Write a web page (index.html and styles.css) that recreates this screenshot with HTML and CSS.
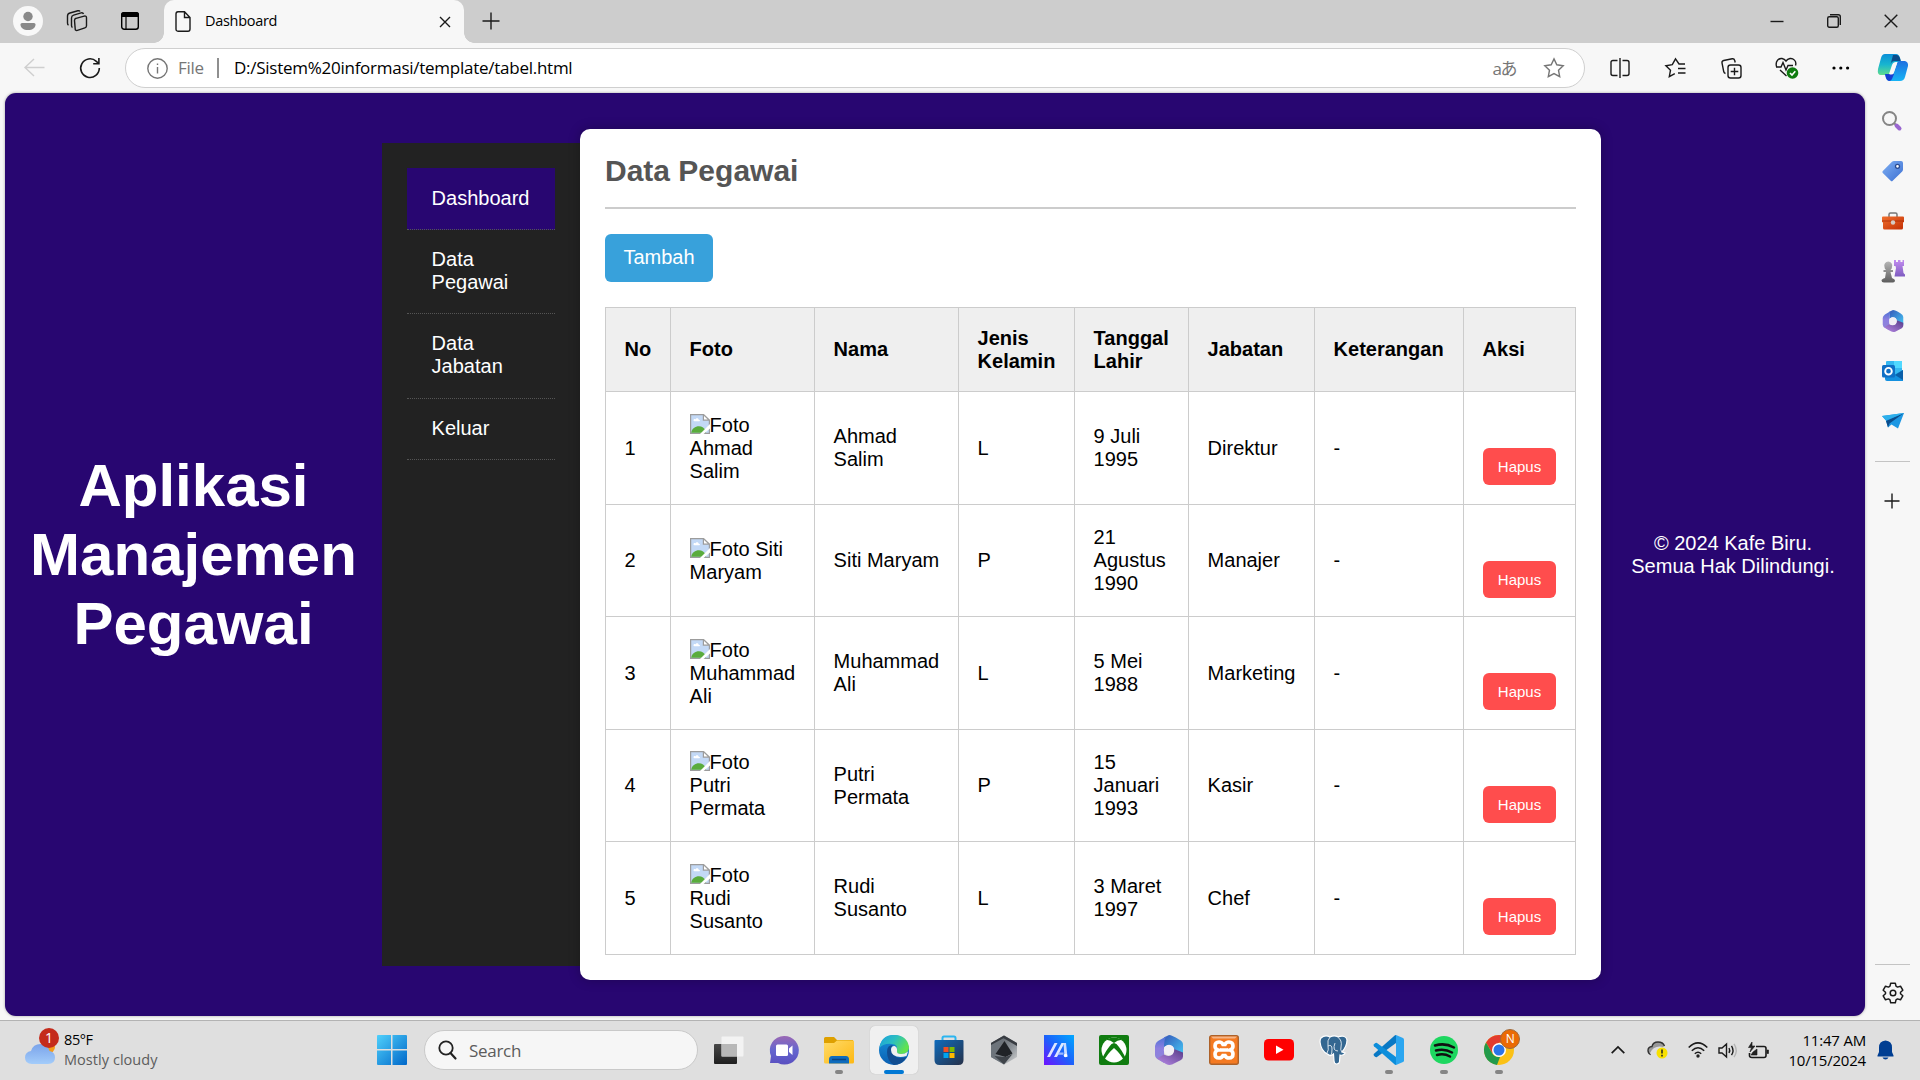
FILE: index.html
```html
<!DOCTYPE html>
<html lang="id">
<head>
<meta charset="utf-8">
<title>Dashboard</title>
<link rel="stylesheet" href="styles.css">
</head>
<body>
<svg class="defs" width="0" height="0">
  <defs>
    <linearGradient id="gWin" x1="0" y1="0" x2="1" y2="1"><stop offset="0" stop-color="#4fd0fb"/><stop offset="1" stop-color="#0067c9"/></linearGradient>
    <linearGradient id="gCloud" x1="0" y1="0" x2="0" y2="1"><stop offset="0" stop-color="#7aa3ea"/><stop offset="1" stop-color="#a3ccfa"/></linearGradient>
    <linearGradient id="gA" x1="0" y1="0" x2="0" y2="1"><stop offset="0" stop-color="#4a72d6"/><stop offset=".45" stop-color="#8d7fe0"/><stop offset="1" stop-color="#8f86d8"/></linearGradient>
    <linearGradient id="gB" x1="0" y1="0" x2="1" y2="1"><stop offset="0" stop-color="#3557b8"/><stop offset="1" stop-color="#45c8f6"/></linearGradient>
    <linearGradient id="gC" x1="0" y1="1" x2="1" y2="0"><stop offset="0" stop-color="#b98ae8"/><stop offset="1" stop-color="#563a86"/></linearGradient>
    <linearGradient id="gCop" x1="0" y1="0" x2="0" y2="1"><stop offset="0" stop-color="#0a8fd8"/><stop offset=".5" stop-color="#18b5cf"/><stop offset="1" stop-color="#5fdc8e"/></linearGradient>
    <linearGradient id="gCop2" x1="0" y1="0" x2="0" y2="1"><stop offset="0" stop-color="#1f6fe0"/><stop offset="1" stop-color="#16b4f5"/></linearGradient>
    <linearGradient id="gTag" x1="0" y1="0" x2="1" y2="1"><stop offset="0" stop-color="#7fb0f3"/><stop offset="1" stop-color="#3c6fd2"/></linearGradient>
    <linearGradient id="gBox" x1="0" y1="0" x2="1" y2="1"><stop offset="0" stop-color="#f0702e"/><stop offset="1" stop-color="#c22e05"/></linearGradient>
    <linearGradient id="gPawn" x1="0" y1="0" x2="0" y2="1"><stop offset="0" stop-color="#b5b5b5"/><stop offset="1" stop-color="#5d5d5d"/></linearGradient>
    <linearGradient id="gRook" x1="0" y1="0" x2="0" y2="1"><stop offset="0" stop-color="#c38df0"/><stop offset="1" stop-color="#7e5cc0"/></linearGradient>
    <linearGradient id="gChat" x1="0" y1="0" x2="0" y2="1"><stop offset="0" stop-color="#9a68b4"/><stop offset=".5" stop-color="#6466cf"/><stop offset="1" stop-color="#5a4fc0"/></linearGradient>
    <linearGradient id="gFold" x1="0" y1="0" x2="1" y2="1"><stop offset="0" stop-color="#ffdb69"/><stop offset="1" stop-color="#fdb813"/></linearGradient>
    <linearGradient id="gEdgeT" x1="0" y1="0" x2="1" y2=".5"><stop offset="0" stop-color="#1b9de0"/><stop offset=".5" stop-color="#2bbfc0"/><stop offset="1" stop-color="#62e34d"/></linearGradient>
    <linearGradient id="gEdgeL" x1="0" y1="0" x2="0" y2="1"><stop offset="0" stop-color="#1792dc"/><stop offset="1" stop-color="#0a5fb2"/></linearGradient>
    <linearGradient id="gStore" x1="0" y1="0" x2="1" y2="1"><stop offset="0" stop-color="#0f6cbd"/><stop offset="1" stop-color="#263048"/></linearGradient>
    <linearGradient id="gHex" x1="0" y1="0" x2="1" y2="1"><stop offset="0" stop-color="#4a4f55"/><stop offset=".6" stop-color="#8b9197"/><stop offset="1" stop-color="#d5d5d5"/></linearGradient>
    <linearGradient id="gM" x1="0" y1="1" x2="1" y2="0"><stop offset="0" stop-color="#7010ff"/><stop offset=".5" stop-color="#1c62fb"/><stop offset="1" stop-color="#00a8ff"/></linearGradient>
    <linearGradient id="gTask" x1="0" y1="0" x2="0" y2="1"><stop offset="0" stop-color="#484848"/><stop offset="1" stop-color="#1f1f1f"/></linearGradient>
    <symbol id="broken" viewBox="0 0 20 20">
      <path d="M.6.6h12.800l6 5.600V19.400H.6z" fill="#c3d9f6" stroke="#9c9c9c" stroke-width="1.200"/>
      <path d="M13.400.6v5.600h6z" fill="#fff" stroke="#9c9c9c" stroke-width="1.200"/>
      <path d="M3.500 6.500c0-1.400 1.500-1.800 2-1 .5-2 3.300-1.600 3.200.2 1.500-.2 1.600 1.500.6 1.500H4.500c-.6 0-1-.3-1-.7z" fill="#fff"/>
      <path d="M1.200 18.800c1-8 12.500-9 14.500-1.500v1.500z" fill="#5aac3d"/>
      <path d="M20.500 9.500V14l-7.500 6.500H9.500z" fill="#fff"/>
    </symbol>
    <symbol id="m365" viewBox="0 0 30 30">
      <path d="M10 2.500L15 0q3 0 10 4.500 4 2 4 5v11L20 14q-1-4-6-4l-4 2z" fill="url(#gB)"/>
      <path d="M12 1.500L4 6Q1 8 1 11v9q0 3 4 5l5 3v-9l0-9q0-5 2-8.500z" fill="url(#gA)"/>
      <path d="M29 17.500v4q0 2-2 3.500l-9 4.500q-3 1-6-.5L3 23.500l7-4q5 3 9-.5l1-5z" fill="url(#gC)"/>
      <circle cx="15" cy="15" r="5.200" fill="#f1eff5"/>
    </symbol>
  </defs>
</svg>

<div class="tabbar">
  <span class="slot w56"><svg width="30" height="30" viewBox="0 0 30 30"><circle cx="15" cy="15" r="15" fill="#f8f8f8"/><circle cx="15" cy="10.500" r="4.700" fill="#8a8a8a"/><path d="M7.500 18.500q0-1.500 1.500-1.500h12q1.500 0 1.500 1.500c0 3.500-3 5.500-7.500 5.500s-7.500-2-7.500-5.500z" fill="#8a8a8a"/></svg></span>
  <span class="slot w43"><svg class="line" width="22" height="22" viewBox="0 0 22 22"><path d="M8.500 10.500q0-1.800 1.600-2.200l8-2.200q2.400-.5 2.400 1.600v8q0 1.700-1.600 2.200l-7.500 2.500q-2.200.5-2.200-1.500z"/><path d="M17.500 4q-.5-1.500-2.400-1.100l-7.500 2.200Q5.500 5.700 5.500 8v7.500q0 1.500 1 2"/><path d="M14 1.600Q13.500.4 11.800.8L4 3Q1.500 3.700 1.500 6v7q0 1.500 1 2.200"/></svg></span>
  <span class="slot w62"><svg width="20" height="20" viewBox="0 0 20 20"><rect x="1.700" y="1.700" width="16.600" height="16.600" rx="2.500" fill="none" stroke="#000" stroke-width="1.400"/><path d="M1 6V3.500Q1 1 3.500 1h13Q19 1 19 3.500V6z"/><path d="M6 6v12" stroke="#000" stroke-width="1.200"/></svg></span>
  <div class="tab">
    <svg class="line" width="16" height="21" viewBox="0 0 16 21"><path d="M1 3q0-2.200 2-2.200h6.500L15 6.500v11.500q0 2.200-2 2.200H3q-2 0-2-2.200zM9.500 1v5.500H15"/></svg>
    <span class="tab-title">Dashboard</span>
    <svg class="line" width="12" height="12" viewBox="0 0 12 12"><path d="M1 1l10 10M11 1L1 11"/></svg>
  </div>
  <span class="slot w55"><svg class="line" width="18" height="18" viewBox="0 0 18 18"><path d="M9 .5v17M.5 9h17"/></svg></span>
  <div class="window-buttons">
    <span class="slot w57"><svg class="line" width="14" height="14" viewBox="0 0 14 14"><path d="M.5 7.500h13"/></svg></span>
    <span class="slot w57"><svg class="line" width="14" height="14" viewBox="0 0 14 14"><rect x=".7" y="2.700" width="10.600" height="10.600" rx="1.500"/><path d="M3 .7h8.300q2 0 2 2V11"/></svg></span>
    <span class="slot w58"><svg class="line" width="14" height="14" viewBox="0 0 14 14"><path d="M.7.7l12.600 12.600M13.300.7L.7 13.300"/></svg></span>
  </div>
</div>

<div class="toolbar">
  <span class="slot w69"><svg class="line faint" width="21" height="19" viewBox="0 0 21 19"><path d="M10 1L1 9.500 10 18M1 9.500h19.500"/></svg></span>
  <span class="slot w42"><svg class="line" width="22" height="22" viewBox="0 0 22 22"><path d="M20.300 11a9.300 9.300 0 1 1-3-6.700L19.700 6.500M19.900 1v5.700h-5.700" stroke-width="1.600"/></svg></span>
  <div class="address">
    <svg class="line grey" width="21" height="21" viewBox="0 0 21 21"><circle cx="10.500" cy="10.500" r="9.700"/><path d="M10.500 9v6.500M10.500 5.500v1.600"/></svg>
    <span class="scheme">File</span>
    <span class="divider"></span>
    <span class="url">D:/Sistem%20informasi/template/tabel.html</span>
    <span class="translate">aあ</span>
    <svg class="line grey" width="20" height="20" viewBox="0 0 20 20"><path d="M10 .9l2.800 5.900 6.400.9-4.700 4.500 1.200 6.500L10 15.600l-5.700 3.100 1.200-6.500L.8 7.700l6.400-.9z"/></svg>
  </div>
  <div class="tools">
    <span class="slot w56"><svg class="line" width="20" height="20" viewBox="0 0 20 20"><path d="M7.500 2.500H3Q1 2.500 1 4.500v11q0 2 2 2h4.500M12.500 2.500H17q2 0 2 2v11q0 2-2 2h-4.500M10 0v20"/></svg></span>
    <span class="slot w55"><svg class="line" width="21" height="20" viewBox="0 0 21 20"><path d="M20 6h-6L10.500.9 7.300 6.700.9 7.700l4.600 4.500-1.200 6.500 5.500-3M13 10.500h7.500M13 15h7.500"/></svg></span>
    <span class="slot w56"><svg class="line" width="21" height="21" viewBox="0 0 21 21"><rect x="7" y="7" width="13" height="13" rx="2.500"/><path d="M13.500 9.700v7.600M9.700 13.500h7.600M4.500 15.500Q3 15 2.700 13.500L1 5Q.7 3 2.700 2.500l8.500-1.700q2-.3 2.500 1.700l.5 2"/></svg></span>
    <span class="slot w55"><svg class="line" width="24" height="22" viewBox="0 0 24 22"><path d="M1.500 9.500C0 4 4 1 7 1.500q2.500.5 4 2.500 1.500-2 4-2.500c3-.5 7 2.500 5.500 7M1 10h5l2-4.500 3 7.500 2-4.500h5M5 13l6.500 6"/><circle cx="17.500" cy="16" r="5.800" fill="#107c10" stroke="none"/><path d="M15 16l2 2 3.300-3.700" stroke="#fff" stroke-width="1.600"/></svg></span>
    <span class="slot w54"><svg width="18" height="4" viewBox="0 0 18 4"><circle cx="2" cy="2" r="1.600"/><circle cx="8.800" cy="2" r="1.600"/><circle cx="15.600" cy="2" r="1.600"/></svg></span>
    <span class="slot w50"><svg width="30" height="28" viewBox="0 0 30 28"><path d="M7 0h11q3 0 4 4l1 4h-5q-3 0-4 3l-3 9q-1 1-3 1H3q-4 0-3-6L3 4q1-4 4-4z" fill="url(#gCop)"/><path d="M15 1h4q3 1 3.700 6h-6q-3 0-4 3z" fill="#0b4c8a"/><path d="M22 7h5q3.500 1 3 5l-3 11q-1 4-5 4H12q-3 0-4-3l-1-4h6q2 0 3-2l3-9q1-2 3-2z" fill="url(#gCop2)"/><path d="M7 20h9l-2 5q-1 2-3 2Q9 27 8 24z" fill="#173fd2"/><path d="M17.500 9h1.700l-3.700 10.500q-.5 1-2 1h-2z" fill="#f7f7f7"/></svg></span>
  </div>
</div>

<div class="body">
  <div class="page">
    <header class="brand"><h1>Aplikasi Manajemen Pegawai</h1></header>
    <nav class="menu">
      <a class="active">Dashboard</a>
      <a>Data Pegawai</a>
      <a>Data Jabatan</a>
      <a>Keluar</a>
    </nav>
    <main class="card">
      <h2>Data Pegawai</h2>
      <a class="add">Tambah</a>
      <table>
        <colgroup><col class="c-no"><col class="c-foto"><col class="c-nama"><col class="c-jk"><col class="c-tgl"><col class="c-jab"><col class="c-ket"><col class="c-aksi"></colgroup>
        <thead><tr><th>No</th><th>Foto</th><th>Nama</th><th>Jenis Kelamin</th><th>Tanggal Lahir</th><th>Jabatan</th><th>Keterangan</th><th>Aksi</th></tr></thead>
        <tbody>
          <tr><td>1</td><td><svg class="broken"><use href="#broken"/></svg>Foto Ahmad Salim</td><td>Ahmad Salim</td><td>L</td><td>9 Juli 1995</td><td>Direktur</td><td>-</td><td class="action"><button>Hapus</button></td></tr>
          <tr class="short"><td>2</td><td><svg class="broken"><use href="#broken"/></svg>Foto Siti Maryam</td><td>Siti Maryam</td><td>P</td><td>21 Agustus 1990</td><td>Manajer</td><td>-</td><td class="action"><button>Hapus</button></td></tr>
          <tr><td>3</td><td><svg class="broken"><use href="#broken"/></svg>Foto Muhammad Ali</td><td>Muhammad Ali</td><td>L</td><td>5 Mei 1988</td><td>Marketing</td><td>-</td><td class="action"><button>Hapus</button></td></tr>
          <tr class="short"><td>4</td><td><svg class="broken"><use href="#broken"/></svg>Foto<br>Putri Permata</td><td>Putri Permata</td><td>P</td><td>15 Januari 1993</td><td>Kasir</td><td>-</td><td class="action"><button>Hapus</button></td></tr>
          <tr><td>5</td><td><svg class="broken"><use href="#broken"/></svg>Foto<br>Rudi Susanto</td><td>Rudi Susanto</td><td>L</td><td>3 Maret 1997</td><td>Chef</td><td>-</td><td class="action"><button>Hapus</button></td></tr>
        </tbody>
      </table>
    </main>
    <footer class="copyright">© 2024 Kafe Biru.<br>Semua Hak Dilindungi.</footer>
  </div>

  <aside class="sidebar">
    <span class="app"><svg width="20" height="20" viewBox="0 0 20 20"><circle cx="7.500" cy="7.500" r="6.500" fill="none" stroke="#858585" stroke-width="2"/><path d="M12 12l2 2" stroke="#858585" stroke-width="2"/><path d="M14.500 14.500l3 3" stroke="#9a66d0" stroke-width="4" stroke-linecap="round"/></svg></span>
    <span class="app"><svg width="21" height="21" viewBox="0 0 21 21"><path d="M10 .8q.8-.8 2-.8h7q2 0 2 2v6.500q0 1.200-.8 2l-9.500 9.300q-1 1-2 0L.8 12q-1-1 0-2z" fill="url(#gTag)"/><circle cx="15.500" cy="5.300" r="2" fill="#fff" stroke="#2c4d92" stroke-width="1.300"/></svg></span>
    <span class="app"><svg width="22" height="18" viewBox="0 0 22 18"><path d="M7 5V2.500Q7 1 8.500 1h5Q15 1 15 2.500V5" fill="none" stroke="#777" stroke-width="1.500"/><path d="M0 5.500Q0 4.500 1 4.500h20q1 0 1 1V10l-1 .5V16q0 1.500-1.500 1.500h-17Q1 17.500 1 16v-5.500L0 10z" fill="url(#gBox)"/><path d="M0 9h22" stroke="#a92b08" stroke-width=".8"/><circle cx="11" cy="10.500" r="2.200" fill="#d5cbc6"/></svg></span>
    <span class="app"><svg width="24" height="23" viewBox="0 0 24 23"><path d="M13 0h2v2h2V0h2.500v2h2V0H23v6h-1.500l1 7 1.500 1.500v2H13.500L15 8 14.500 6H13z" fill="url(#gRook)"/><path d="M3.500 7a4 4 0 1 1 7.500 0q0 2-1.500 3H12v2H9.500l1.500 6q3 1 3 2.500 0 2-2 2H3q-2.500 0-2.500-2Q.5 19 4 18l1-6H2.500v-2H5q-1.500-1-1.500-3z" fill="url(#gPawn)"/></svg></span>
    <span class="app"><svg width="22" height="22"><use href="#m365"/></svg></span>
    <span class="app"><svg width="21" height="20" viewBox="0 0 21 20"><rect x="4" width="16" height="18" rx="1" fill="#35b8f1"/><path d="M12 0h7q1 0 1 1v6h-8z" fill="#50d9ff"/><path d="M3 10l9 4 9-5v11H5q-2 0-2-2z" fill="#1490df"/><path d="M13 14l8-5v10z" fill="#0a5fa8"/><rect y="4" width="13" height="12.500" rx="1.500" fill="#0f6fc5"/><circle cx="6.500" cy="10.200" r="3.300" fill="none" stroke="#fff" stroke-width="1.900"/></svg></span>
    <span class="app"><svg width="22" height="16" viewBox="0 0 22 16"><path d="M0 3l22-3-6 15.500-6.500-4-3.500 3-2-7z" fill="#1c97e3"/><path d="M22 0L4 8l2 6.500 1.500-4z" fill="#0a4d8c"/><path d="M0 3l22-3L4 7.500z" fill="#2db0ec"/></svg></span>
    <span class="rule"></span>
    <span class="app add-app"><svg class="line" width="16" height="16" viewBox="0 0 16 16"><path d="M8 .5v15M.5 8h15"/></svg></span>
    <span class="rule low"></span>
    <span class="app"><svg class="line" width="22" height="22" viewBox="0 0 22 22"><path d="M8.700 1.200h4.600l.7 3 1.500.9 3-.9 2.300 4-2.300 2v1.600l2.300 2-2.300 4-3-.9-1.500.9-.7 3H8.700l-.7-3-1.500-.9-3 .9-2.300-4 2.300-2v-1.600l-2.300-2 2.300-4 3 .9L8 4.200z" stroke-linejoin="round" stroke-width="1.500"/><circle cx="11" cy="11" r="2.800" stroke-width="1.500"/></svg></span>
  </aside>
</div>

<div class="taskbar">
  <div class="weather">
    <svg width="36" height="38" viewBox="0 0 36 38"><circle cx="24" cy="19" r="6" fill="#f49b1c"/><path d="M7 36q-7 0-7-6.500Q0 24 6 23q2-7 9.500-7 7 0 9 7 5.500 1 5.500 6.500Q30 36 23 36z" fill="url(#gCloud)"/><circle cx="24" cy="10" r="10" fill="#c42b1c"/><text x="24" y="15" class="badge">1</text></svg>
    <div><div class="temp">85°F</div><div class="sky">Mostly cloudy</div></div>
  </div>
  <svg class="start" width="30" height="30" viewBox="0 0 30 30"><path d="M1 0h13v14H0V1q0-1 1-1zM15.500 0H29q1 0 1 1v13H15.500zM0 15.500h14V30H1q-1 0-1-1zM15.500 15.500H30V29q0 1-1 1H15.500z" fill="url(#gWin)"/></svg>
  <div class="search"><svg width="19" height="20" viewBox="0 0 19 20"><circle cx="8" cy="8" r="6.700" fill="none" stroke="#222" stroke-width="1.800"/><path d="M12.500 13l5 5.500" stroke="#222" stroke-width="2.200" stroke-linecap="round"/></svg><span>Search</span></div>
  <div class="apps">
    <span class="task"><svg width="30" height="30" viewBox="0 0 30 30"><rect y="9" width="23" height="20" rx="1" fill="url(#gTask)"/><rect x="7.500" y="1.500" width="22" height="20" rx="1" fill="#f8f8f8" opacity=".8"/><rect x="7.500" y="9" width="15.500" height="12.500" fill="#b8b8b8"/></svg></span>
    <span class="task"><svg width="30" height="30" viewBox="0 0 30 30"><path d="M15 1a14.300 14.300 0 1 1-6 27H1l1-7A14.300 14.300 0 0 1 15 1z" fill="url(#gChat)"/><rect x="7" y="9.500" width="12" height="11.500" rx="1.500" fill="#fff"/><path d="M20 13.500l3.500-3v9.500L20 17z" fill="#fff"/></svg></span>
    <span class="task running"><svg width="30" height="30" viewBox="0 0 30 30"><path d="M0 3.500Q0 2 1.500 2H10l3 3h16v8H0z" fill="#dea000"/><path d="M0 8h10l3-2.500h16q1 0 1 1V27q0 1.500-1.500 1.500h-27Q0 28.500 0 27z" fill="url(#gFold)"/><path d="M5 28.500v-4q0-3.500 3-3.500h14q3 0 3 3.500v4z" fill="#0f6cbd"/><path d="M8 24.500h14" stroke="#0a4382" stroke-width="1.500"/></svg></span>
    <span class="task running current"><svg width="30" height="30" viewBox="0 0 30 30"><circle cx="15" cy="15" r="15" fill="url(#gEdgeL)"/><path d="M.5 13Q2 0 15 0t15 12q0 7-8 7-5 0-4-3 1-7-5-7Q5 8 .5 13z" fill="url(#gEdgeT)"/><path d="M8 17q0-7 6-7-4 4 0 9 4 6 13.500 3Q23 30 15 30 8 26 8 17z" fill="#114d91"/><path d="M12 15q0-4 3.500-4 3 1 2.500 5-.5 3 4 3 4 0 7-2.500l-1.500 4.500q-8 2.500-13-1-2.500-2-2.500-5z" fill="#f0f0f0"/></svg></span>
    <span class="task"><svg width="30" height="30" viewBox="0 0 30 30"><path d="M8.500 8V3Q8.500 1.500 10 1.500h10Q21.500 1.500 21.500 3v5" fill="none" stroke="#2bb5f0" stroke-width="2"/><path d="M.5 6q0-1 1-1h27q1 0 1 1v19q0 5-5 5h-19q-5 0-5-5z" fill="url(#gStore)"/><path fill="#f25022" d="M9.500 12h5v5h-5z"/><path fill="#7fba00" d="M15.500 12h5v5h-5z"/><path fill="#00a4ef" d="M9.500 18h5v5h-5z"/><path fill="#ffb900" d="M15.500 18h5v5h-5z"/></svg></span>
    <span class="task"><svg width="30" height="30" viewBox="0 0 30 30"><path d="M15 .5L28 8v14l-13 7.500L2 22V8z" fill="url(#gHex)"/><path d="M15 .5L28 8v3L15 3.500 2 11V8z" fill="#383c42"/><path d="M2 10l13-7-9 17 9 9.500L2 22z" fill="#6d747b"/><path d="M15.500 6l8 12.500-7 3.500-10-3z" fill="#202327"/><path d="M5.500 21l11 1 7-3-8.500 10.500z" fill="#3f444a"/></svg></span>
    <span class="task"><svg width="30" height="30" viewBox="0 0 30 30"><path d="M0 0h30v30H0z" fill="url(#gM)"/><path d="M3 22l7.500-14h3L6 22zM10 22l7.500-14h3L13 22z" fill="#fff" opacity=".85"/><path d="M19.500 8h2.500l1.500 14h-3z" fill="#c9dcff"/><path d="M14.500 17.500h5v2.200h-6z" fill="#b9d0ff" opacity=".8"/><circle cx="21.500" cy="20.500" r="1.700" fill="#fff"/></svg></span>
    <span class="task"><svg width="30" height="30" viewBox="0 0 30 30"><rect width="30" height="30" rx="2" fill="#107c10"/><circle cx="15" cy="15" r="12.500" fill="#fff"/><path d="M6 5.500Q10 4 15 8q5-4 9-2.500L22 4Q15 1 8 4zM3 24Q7 15 12.500 9L15 8l2.500 1Q23 15 27 24l-2 2Q22 19 15 13 8 19 5 26z" fill="#107c10"/></svg></span>
    <span class="task"><svg width="30" height="30"><use href="#m365"/></svg></span>
    <span class="task"><svg width="30" height="30" viewBox="0 0 30 30"><rect x=".7" y=".7" width="28.600" height="28.600" rx="2" fill="#f47a22" stroke="#ad6129" stroke-width="1.400"/><path d="M2 1.500h26l-2 2H4z" fill="#f5b588"/><path d="M14 9.500q-1-2.500-4-2.500-4 0-4 4 0 3 3 4-3 1-3 4 0 4 4 4 3 0 4-2.500h2q1 2.500 4 2.500 4 0 4-4 0-3-3-4 3-1 3-4 0-4-4-4-3 0-4 2.500zM11 15h8" fill="none" stroke="#fff" stroke-width="3.600"/></svg></span>
    <span class="task"><svg width="30" height="30" viewBox="0 0 30 30"><rect y="4" width="30" height="21.500" rx="4.500" fill="#f00"/><path d="M12 10.500v8.500l7.500-4.200z" fill="#fff"/></svg></span>
    <span class="task"><svg width="30" height="30" viewBox="0 0 30 30"><path d="M2 3q4-3.500 9-1 4-2 8-.2Q27-.5 28 5q0 6-5 12l3 1q-1 3-5 2l-.5 7q-.5 2-3 2-2 0-2.500-3l-.5-7q-3 3-6 0Q2 16 1 7q0-3 1-4z" fill="#336791" stroke="#fff" stroke-width="1.200"/><path d="M11 2q-3 3-2 9 1 4-1 7M18.500 2q5 3 3.500 10-1 3 1 5M9 11q4-2 4 3t-1 6M16 8q-3 8 3 8" fill="none" stroke="#e8eef4" stroke-width=".9"/></svg></span>
    <span class="task running"><svg width="30" height="30" viewBox="0 0 30 30"><path d="M22 0l7 3q1 .5 1 1.500v21q0 1-1 1.500l-7 3z" fill="#2ba6f0"/><path d="M22 0v8L3 22q-1 .5-2-.3l-1-1q-1-1 0-2L21 .3z" fill="#0878c4"/><path d="M22 30v-8L3 8q-1-.5-2 .3l-1 1q-1 1 0 2L21 29.700z" fill="#0d8edb"/></svg></span>
    <span class="task running"><svg width="30" height="30" viewBox="0 0 30 30"><circle cx="15" cy="15" r="14" fill="#1ed760"/><path d="M6 10.500q10-3 19 2M7 15.500q8.500-2.300 16 2M8 20q7-2 13 1.500" fill="none" stroke="#101010" stroke-width="2.500" stroke-linecap="round"/></svg></span>
    <span class="task running"><svg width="30" height="30" viewBox="0 0 30 30"><circle cx="15" cy="15" r="15" fill="#fbc116"/><path d="M2 7.500A15 15 0 0 1 28 7.500H15l-6.500 11z" fill="#e33b2e"/><path d="M2 7.500l6.500 11.300q2.500 3.500 7.500 3.200l-3 8A15 15 0 0 1 2 7.500z" fill="#229a4b"/><circle cx="15" cy="15" r="7" fill="#fff"/><circle cx="15" cy="15" r="5.500" fill="#2b74e8"/></svg><span class="notice">N</span></span>
  </div>
  <div class="tray">
    <span class="slot w38"><svg class="line" width="14" height="8" viewBox="0 0 14 8"><path d="M.7 7.200L7 1l6.300 6.200" stroke-width="1.700"/></svg></span>
    <span class="slot w40"><svg width="21" height="18" viewBox="0 0 21 18"><path d="M4 13.500q-3-1-3-4Q1 6 5 5.500 6 1 11 1q5 0 6.500 4" fill="#999" stroke="#333" stroke-width="1.400"/><path d="M3 12Q7 4 16 6l-6 8H4z" fill="#dedede"/><circle cx="15" cy="12" r="5.500" fill="#f7e000"/><path d="M15 8.500v4M15 13.700v1.700" stroke="#222" stroke-width="1.500"/></svg></span>
    <span class="slot w41"><svg class="line" width="20" height="16" viewBox="0 0 20 16"><path d="M.7 5.500q9.300-9.300 18.600 0M3.800 8.700q6.200-6 12.400 0M6.800 11.700q3.200-3 6.400 0" stroke-width="1.500"/><circle cx="10" cy="14" r="1.700" fill="#222" stroke="none"/></svg></span>
    <span class="slot w20"><svg class="line" width="20" height="17" viewBox="0 0 20 17"><path d="M1 6h3l4.500-4v13L4 11H1zM11 6q1.500 2.500 0 5M13.500 3.800q3 4.700 0 9.400"/><path d="M16 1.800q4.500 6.700 0 13.400" stroke="#b5b5b5"/></svg></span>
    <span class="slot w41"><svg class="line" width="21" height="17" viewBox="0 0 21 17"><path d="M8 4.500h8q2 0 2 2v7q0 2-2 2H4q-2.500 0-2.500-2V11" stroke-width="1.600"/><path d="M19 8h1.500v3.500H19zM9 7v6H3l2-3zM4 0L.5 5.500h3L2 10l5-6H4z" fill="#222" stroke-width=".6"/></svg></span>
    <div class="clock"><div class="time">11:47 AM</div><div class="date">10/15/2024</div></div>
    <svg class="bell" width="17" height="20" viewBox="0 0 17 20"><path d="M8.500.5Q15 1 15 7.500V12l1.500 3.500v1H.5v-1L2 12V7.500Q2 1 8.500.5zM5.500 17.500h6q-1 2-3 2t-3-2z" fill="#003e92"/></svg>
  </div>
</div>
</body>
</html>
```

FILE: styles.css
```css
* { box-sizing: border-box; }
body {
  margin: 0;
  width: 1920px;
  height: 1080px;
  overflow: hidden;
  display: flex;
  flex-direction: column;
  background: #f7f7f7;
  color: #000;
  font-family: "Open Sans", "Noto Sans", "Noto Sans CJK JP", sans-serif;
}
.defs { position: absolute; }
svg { display: block; flex: none; overflow: visible; }
.line { fill: none; stroke: #1a1a1a; stroke-width: 1.4; }
.line.grey { stroke: #767676; }
.line.faint { stroke: #cfcfcf; }
.slot { display: flex; align-items: center; justify-content: center; flex: none; }
.w20 { width: 20px; } .w38 { width: 38px; } .w40 { width: 40px; } .w41 { width: 41px; }
.w42 { width: 42px; } .w43 { width: 43px; } .w50 { width: 50px; } .w54 { width: 54px; }
.w55 { width: 55px; } .w56 { width: 56px; } .w57 { width: 57px; } .w58 { width: 58px; }
.w62 { width: 62px; } .w69 { width: 69px; }

/* Tab strip */
.tabbar { display: flex; height: 43px; flex: none; background: #cdcdcd; }
.tabbar > .slot, .window-buttons { padding-bottom: 1px; }
.tabbar > .w43 { padding-right: 1px; }
.tabbar > .w55 { padding-right: 2px; }
.tab {
  position: relative;
  display: flex;
  align-items: center;
  width: 300px;
  margin-left: 3px;
  padding: 0 13px 0 11px;
  background: #f7f7f7;
  border-radius: 10px 10px 0 0;
}
.tab::before, .tab::after {
  content: "";
  position: absolute;
  bottom: 0;
  width: 10px;
  height: 10px;
}
.tab::before { left: -10px; background: radial-gradient(circle at 0 0, transparent 9.500px, #f7f7f7 10px); }
.tab::after { right: -10px; background: radial-gradient(circle at 100% 0, transparent 9.500px, #f7f7f7 10px); }
.tab-title { flex: 1; margin-left: 14px; padding-bottom: 2px; font-size: 14.500px; letter-spacing: -.3px; }
.window-buttons { display: flex; margin-left: auto; }

/* Address row */
.toolbar { display: flex; height: 50px; flex: none; }
.toolbar > .slot { padding-bottom: 1px; }
.address {
  display: flex;
  align-items: center;
  width: 1460px;
  height: 40px;
  margin: 5px 0 0 14px;
  padding: 0 20px 0 21px;
  background: #fff;
  border: 1px solid #cfcfcf;
  border-radius: 20px;
  font-size: 17px;
}
.scheme { width: 39px; margin-left: 10px; padding-bottom: 2px; color: #767676; letter-spacing: -.3px; }
.divider { width: 2px; height: 20px; background: #8f8f8f; }
.url { flex: 1; margin-left: 15px; padding-bottom: 2px; letter-spacing: -.26px; white-space: nowrap; }
.translate { margin-right: 28px; padding-bottom: 2px; color: #767676; font-size: 17px; letter-spacing: -1.500px; }
.tools { display: flex; margin-left: 7px; padding-bottom: 0; }

/* Viewport */
.body { display: flex; height: 927px; flex: none; }
.page {
  display: flex;
  align-items: center;
  width: 1860px;
  height: 923px;
  margin-left: 5px;
  background: #280671;
  border-radius: 11px;
  box-shadow: 0 0 3px rgba(0, 0, 0, .35);
  color: #fff;
  font: 20px/23px "Liberation Sans", Arial, sans-serif;
}
.brand { width: 377px; padding: 0 25px; text-align: center; }
.brand h1 { margin: 0; font-size: 60px; line-height: 69px; }
.menu { width: 198px; height: 823px; padding: 25px; background: #222; }
.menu a { display: block; padding: 18px 24px 19px 24.600px; border-bottom: 1px dotted #555; }
.menu .active { padding-top: 19px; background: #280671; }
.menu a:nth-child(3) { padding-bottom: 20px; }
.card {
  width: 1021px;
  height: 851px;
  padding: 25px;
  background: #fff;
  border-radius: 10px;
  box-shadow: 0 0 12px rgba(0, 0, 0, .25);
  color: #000;
}
.card h2 {
  height: 55px;
  margin: 0 0 25px;
  border-bottom: 2px solid #ccc;
  color: #555;
  font-size: 30px;
  line-height: 34px;
}
.add {
  display: flex;
  align-items: center;
  justify-content: center;
  width: 108px;
  height: 48px;
  margin-bottom: 25px;
  padding-bottom: 1px;
  background: #38a1db;
  border-radius: 6px;
  color: #fff;
}
table { width: 971px; table-layout: fixed; border-collapse: collapse; }
.c-no { width: 65px; } .c-foto { width: 144px; } .c-nama { width: 144px; } .c-jk { width: 116px; }
.c-tgl { width: 114px; } .c-jab { width: 126px; } .c-ket { width: 149px; } .c-aksi { width: 112px; }
th, td { padding: 0 18px 0 18.600px; border: 1px solid #ccc; text-align: left; vertical-align: middle; }
th { height: 84px; background: #efefef; }
td { height: 113px; }
.short td { height: 112px; }
td.action { padding-bottom: 19px; padding-left: 19px; vertical-align: bottom; }
.short td.action { padding-bottom: 18px; }
.broken { display: inline-block; width: 20px; height: 20px; margin-bottom: -2px; vertical-align: baseline; }
button {
  display: block;
  width: 73px;
  height: 37px;
  padding: 0;
  border: 0;
  border-radius: 6px;
  background: #ff4d4d;
  color: #fff;
  font: 15px "Liberation Sans", Arial, sans-serif;
}
.copyright { width: 264px; text-align: center; }

/* Edge sidebar */
.sidebar { display: flex; flex-direction: column; align-items: center; width: 55px; }
.app { display: flex; align-items: center; justify-content: center; width: 50px; height: 50px; flex: none; }
.app:first-child { margin-top: 3px; padding-right: 1px; }
.rule { width: 35px; height: 1px; margin-top: 15px; background: #c4c4c4; flex: none; }
.add-app { margin-top: 14px; padding-right: 1px; }
.rule.low { margin-top: auto; }
.sidebar .app:last-child { height: 55px; padding-bottom: 0; }

/* Taskbar */
.taskbar { display: flex; align-items: center; height: 60px; flex: none; background: #dfdfdf; border-top: 1px solid #b3b3b3; padding-bottom: 1px; }
.weather { display: flex; align-items: center; width: 377px; padding-left: 25px; font-size: 14.500px; line-height: 20px; }
.weather svg { margin: -7px 3px 0 0; }
.temp { letter-spacing: -.4px; }
.sky { color: #5c5c5c; letter-spacing: .05px; }
.badge { fill: #fff; font-size: 14px; text-anchor: middle; }
.search {
  display: flex;
  align-items: center;
  gap: 12px;
  width: 274px;
  height: 40px;
  margin-left: 17px;
  padding-left: 13px;
  background: #f6f6f6;
  border: 1px solid #c9c9c9;
  border-radius: 20px;
  color: #5c5c5c;
  font-size: 17px;
  letter-spacing: -.3px;
}
.apps { display: flex; gap: 7.070px; margin-left: 6.500px; }
.task { position: relative; display: flex; align-items: center; justify-content: center; width: 48px; height: 48px; border-radius: 5px; }
.running::after { content: ""; position: absolute; left: 20px; bottom: 0; width: 8px; height: 4px; border-radius: 2px; background: #858585; }
.current { background: #f0f0f0; box-shadow: 0 0 1px #aaa; }
.current::after { left: 14px; width: 20px; background: #0078d4; }
.notice {
  position: absolute;
  left: 25px;
  top: 3px;
  width: 20px;
  height: 20px;
  border: 1px solid #a06a3a;
  border-radius: 50%;
  background: #ea6a05;
  color: #fff;
  font-size: 12px;
  line-height: 18px;
  text-align: center;
}
.tray { display: flex; align-items: center; margin-left: auto; padding-right: 26px; }
.clock { width: 87px; padding-bottom: 1px; font-size: 15px; line-height: 20px; text-align: right; letter-spacing: -.2px; white-space: nowrap; }
.bell { margin-left: 11px; }
```
